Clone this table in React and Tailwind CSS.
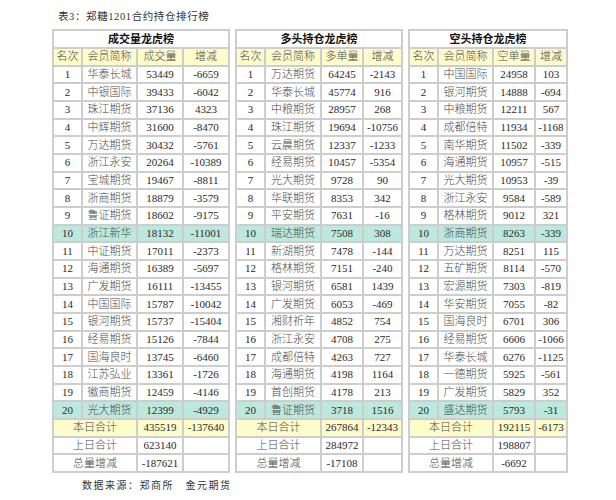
const t1 = {
  title: "成交量龙虎榜",
  head: ["名次", "会员简称", "成交量", "增减"],
  cols: [29, 55, 46, 46],
  rows: [
    ["华泰长城", "53449", "-6659"],
    ["中银国际", "39433", "-6042"],
    ["珠江期货", "37136", "4323"],
    ["中辉期货", "31600", "-8470"],
    ["万达期货", "30432", "-5761"],
    ["浙江永安", "20264", "-10389"],
    ["宝城期货", "19467", "-8811"],
    ["浙商期货", "18879", "-3579"],
    ["鲁证期货", "18602", "-9175"],
    ["浙江新华", "18132", "-11001"],
    ["中证期货", "17011", "-2373"],
    ["海通期货", "16389", "-5697"],
    ["广发期货", "16111", "-13455"],
    ["中国国际", "15787", "-10042"],
    ["银河期货", "15737", "-15404"],
    ["经易期货", "15126", "-7844"],
    ["国海良时", "13745", "-6460"],
    ["江苏弘业", "13361", "-1726"],
    ["徽商期货", "12459", "-4146"],
    ["光大期货", "12399", "-4929"],
  ],
  sum: ["435519", "-137640"],
  prev: "623140",
  diff: "-187621",
};

const t2 = {
  title: "多头持仓龙虎榜",
  head: ["名次", "会员简称", "多单量", "增减"],
  cols: [29, 56, 42, 39],
  rows: [
    ["万达期货", "64245", "-2143"],
    ["华泰长城", "45774", "916"],
    ["中粮期货", "28957", "268"],
    ["珠江期货", "19694", "-10756"],
    ["云晨期货", "12337", "-1233"],
    ["经易期货", "10457", "-5354"],
    ["光大期货", "9728", "90"],
    ["华联期货", "8353", "342"],
    ["平安期货", "7631", "-16"],
    ["瑞达期货", "7508", "308"],
    ["新湖期货", "7478", "-144"],
    ["格林期货", "7151", "-240"],
    ["银河期货", "6581", "1439"],
    ["广发期货", "6053", "-469"],
    ["湘财祈年", "4852", "754"],
    ["浙江永安", "4708", "275"],
    ["成都倍特", "4263", "727"],
    ["海通期货", "4198", "1164"],
    ["首创期货", "4178", "213"],
    ["鲁证期货", "3718", "1516"],
  ],
  sum: ["267864", "-12343"],
  prev: "284972",
  diff: "-17108",
};

const t3 = {
  title: "空头持仓龙虎榜",
  head: ["名次", "会员简称", "空单量", "增减"],
  cols: [29, 55, 42, 32],
  rows: [
    ["中国国际", "24958", "103"],
    ["银河期货", "14888", "-694"],
    ["中粮期货", "12211", "567"],
    ["成都倍特", "11934", "-1168"],
    ["南华期货", "11502", "-339"],
    ["海通期货", "10957", "-515"],
    ["光大期货", "10953", "-39"],
    ["浙江永安", "9584", "-589"],
    ["格林期货", "9012", "321"],
    ["浙商期货", "8263", "-339"],
    ["万达期货", "8251", "115"],
    ["五矿期货", "8114", "-570"],
    ["宏源期货", "7303", "-819"],
    ["华安期货", "7055", "-82"],
    ["国海良时", "6701", "306"],
    ["经易期货", "6606", "-1066"],
    ["华泰长城", "6276", "-1125"],
    ["一德期货", "5925", "-561"],
    ["广发期货", "5829", "352"],
    ["盛达期货", "5793", "-31"],
  ],
  sum: ["192115", "-6173"],
  prev: "198807",
  diff: "-6692",
};

const td = "border-2 border-[#cdcdcd] text-center p-0 leading-none whitespace-nowrap";
const cn = "font-light text-[#4a4a4a]";
const tr = "h-[17.68px]";

function Board({ d }) {
  const width = d.cols.reduce((a, b) => a + b, 0);
  return (
    <table
      className="table-fixed border-collapse border-2 border-[#cdcdcd] text-[11px] text-[#2a2a2a]"
      style={{ width }}
    >
      <colgroup>
        {d.cols.map((w, i) => (
          <col key={i} style={{ width: w }} />
        ))}
      </colgroup>
      <tbody>
        <tr className="h-[18px]">
          <td colSpan={4} className={`${td} bg-white font-bold text-[#111]`}>
            {d.title}
          </td>
        </tr>
        <tr className={`${tr} bg-[#fffccc]`}>
          {d.head.map((h, i) => (
            <td key={i} className={`${td} ${cn}`}>
              {h}
            </td>
          ))}
        </tr>
        {d.rows.map((r, i) => {
          const hi = i === 9 || i === 19;
          return (
            <tr key={i} className={`${tr} ${hi ? "bg-[#bde8de]" : "bg-white"}`}>
              <td className={td}>{i + 1}</td>
              <td className={`${td} ${cn}`}>{r[0]}</td>
              <td className={td}>{r[1]}</td>
              <td className={td}>{r[2]}</td>
            </tr>
          );
        })}
        <tr className={`${tr} bg-[#fffccc]`}>
          <td colSpan={2} className={`${td} ${cn}`}>本日合计</td>
          <td className={td}>{d.sum[0]}</td>
          <td className={td}>{d.sum[1]}</td>
        </tr>
        <tr className={`${tr} bg-white`}>
          <td colSpan={2} className={`${td} ${cn}`}>上日合计</td>
          <td className={td}>{d.prev}</td>
          <td className={td}></td>
        </tr>
        <tr className={`${tr} bg-white`}>
          <td colSpan={2} className={`${td} ${cn}`}>总量增减</td>
          <td className={td}>{d.diff}</td>
          <td className={td}></td>
        </tr>
      </tbody>
    </table>
  );
}

export default function App() {
  return (
    <div className="w-[616px] h-[500px] bg-white font-['Liberation_Serif','Noto_Sans_CJK_SC',serif] pl-[52px] pt-[11px]">
      <div className="pl-[6px] h-[17px] text-[10.5px] tracking-[0.6px] text-[#333] leading-[12px]">
        表3：郑糖1201合约持仓排行榜
      </div>
      <div className="flex gap-[5px] mt-[1px]">
        <Board d={t1} />
        <Board d={t2} />
        <Board d={t3} />
      </div>
      <div className="pl-[30px] mt-[8px] text-[10px] tracking-[1.5px] text-[#333] leading-none">
        数据来源：郑商所　金元期货
      </div>
    </div>
  );
}
